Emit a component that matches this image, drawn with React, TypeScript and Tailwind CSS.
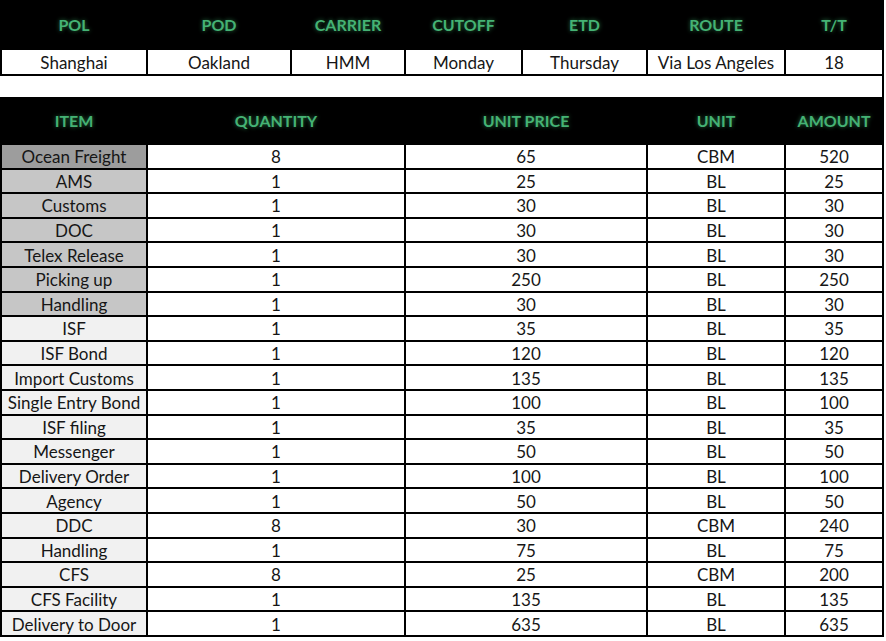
const route = {
  cols: ['POL', 'POD', 'CARRIER', 'CUTOFF', 'ETD', 'ROUTE', 'T/T'],
  vals: ['Shanghai', 'Oakland', 'HMM', 'Monday', 'Thursday', 'Via Los Angeles', '18'],
}

const items: [string, number, number, string, number][] = [
  ['Ocean Freight', 8, 65, 'CBM', 520],
  ['AMS', 1, 25, 'BL', 25],
  ['Customs', 1, 30, 'BL', 30],
  ['DOC', 1, 30, 'BL', 30],
  ['Telex Release', 1, 30, 'BL', 30],
  ['Picking up', 1, 250, 'BL', 250],
  ['Handling', 1, 30, 'BL', 30],
  ['ISF', 1, 35, 'BL', 35],
  ['ISF Bond', 1, 120, 'BL', 120],
  ['Import Customs', 1, 135, 'BL', 135],
  ['Single Entry Bond', 1, 100, 'BL', 100],
  ['ISF filing', 1, 35, 'BL', 35],
  ['Messenger', 1, 50, 'BL', 50],
  ['Delivery Order', 1, 100, 'BL', 100],
  ['Agency', 1, 50, 'BL', 50],
  ['DDC', 8, 30, 'CBM', 240],
  ['Handling', 1, 75, 'BL', 75],
  ['CFS', 8, 25, 'CBM', 200],
  ['CFS Facility', 1, 135, 'BL', 135],
  ['Delivery to Door', 1, 635, 'BL', 635],
]

const head = 'flex items-center justify-center text-[16px] font-bold text-[#45b274] [text-shadow:0_0_4px_rgba(70,200,120,0.55)]'
const base = 'flex items-center justify-center overflow-hidden pt-[2px] text-[17px] leading-[20px] text-[#161616]'
const cell = `${base} bg-white`

function itemBg(i: number) {
  if (i === 0) return 'bg-[#9d9d9d]'
  if (i < 7) return 'bg-[#c6c6c6]'
  return 'bg-[#f1f1f1]'
}

export default function App() {
  return (
    <div className="w-[886px] h-[641px] bg-white" style={{ fontFamily: 'Lato, "Open Sans", sans-serif' }}>
      <div className="w-[884px] bg-black pl-[2px] pb-[2px]">
        {/* Route table */}
        <div className="grid grid-cols-[144px_142px_112px_115px_123px_136px_96px] gap-x-[2px] h-[50px]">
          {route.cols.map(c => (
            <div key={c} className={head}>{c}</div>
          ))}
        </div>
        <div className="grid grid-cols-[144px_142px_112px_115px_123px_136px_96px] gap-x-[2px] h-[24px]">
          {route.vals.map(v => (
            <div key={v} className={cell}>{v}</div>
          ))}
        </div>
        <div className="mt-[2px] h-[21px] bg-white -ml-[2px] w-[882px]" />

        {/* Charges table */}
        <div className="grid grid-cols-[144px_256px_240px_136px_96px] gap-x-[2px] h-[48px]">
          {['ITEM', 'QUANTITY', 'UNIT PRICE', 'UNIT', 'AMOUNT'].map(c => (
            <div key={c} className={head}>{c}</div>
          ))}
        </div>
        <div className="grid grid-cols-[144px_256px_240px_136px_96px] gap-x-[2px] gap-y-[2px] auto-rows-[22.6px]">
          {items.map((r, i) => (
            <div key={i} className="contents">
              <div className={`${base} ${itemBg(i)}`}>{r[0]}</div>
              <div className={cell}>{r[1]}</div>
              <div className={cell}>{r[2]}</div>
              <div className={cell}>{r[3]}</div>
              <div className={cell}>{r[4]}</div>
            </div>
          ))}
        </div>
      </div>
    </div>
  )
}
